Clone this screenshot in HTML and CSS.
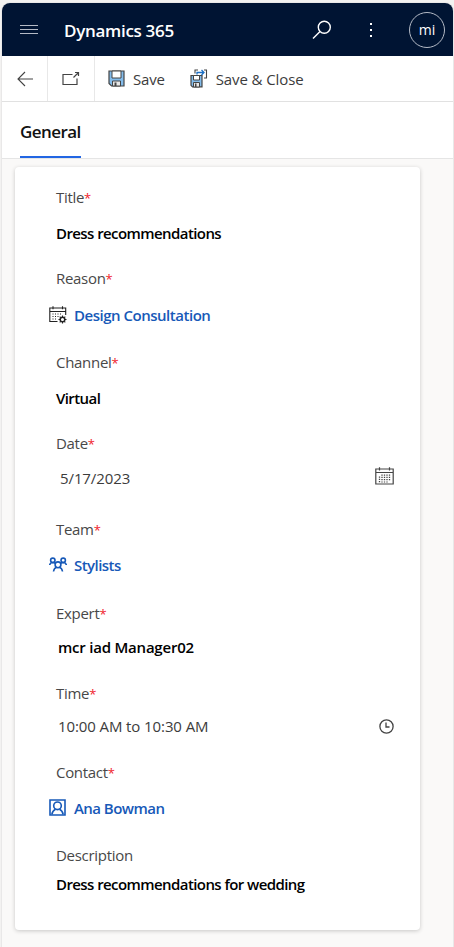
FILE: index.html
```html
<!DOCTYPE html>
<html lang="en">
<head>
<meta charset="utf-8">
<title>Dynamics 365</title>
<link rel="stylesheet" href="styles.css">
</head>
<body>
<div class="app">
  <header class="topbar">
    <svg class="menu" width="20" height="12" viewBox="0 0 20 12" fill="none" stroke="#b4bac6"><path d="M1 1.5h18M1 5.5h18M1 9.5h18"/></svg>
    <span class="brand">Dynamics 365</span>
    <svg class="search" width="20" height="20" viewBox="0 0 20 20" fill="none" stroke="#fff" stroke-width="1.4"><circle cx="12.3" cy="7.2" r="6"/><path d="M8 11.6 1 18.6"/></svg>
    <svg class="more" width="4" height="16" viewBox="0 0 4 16" fill="#fff"><path d="M1 1h2v2H1zM1 7h2v2H1zM1 13h2v2H1z"/></svg>
    <span class="avatar">mi</span>
  </header>
  <nav class="commands">
    <span class="cell back"><svg width="16" height="16" viewBox="0 0 16 16" fill="none" stroke="#444" stroke-width="1.1"><path d="M8 1 1 8l7 7M1 8h15"/></svg></span>
    <span class="cell popout"><svg width="18" height="15" viewBox="0 0 18 15" fill="none" stroke="#444" stroke-width="1.2"><path d="M10.500 3.500H1v10h14V7.500M11.500 6.500 16.500 1.500M13 1.500h3.500V5"/></svg></span>
    <span class="command save"><svg width="17" height="17" viewBox="0 0 17 17"><path d="M1 1h15v15H3.500L1 13.500z" fill="#83bceb" stroke="#444" stroke-width="1.2"/><path d="M4 1h9v7H4z" fill="#fff" stroke="#444"/><path d="M4.500 11h8v5h-8z" fill="#e8e8e8" stroke="#444"/><path d="M6.500 12.500h2V16h-2z" fill="#444"/></svg>Save</span>
    <span class="command"><svg width="18" height="19" viewBox="0 0 18 19"><path d="M1 6.500h11v11.300H2.500L1 16.300z" fill="#83bceb" stroke="#444" stroke-width="1.2"/><path d="M3.500 6.500h6v4.500h-6z" fill="#fff" stroke="#444"/><path d="M3.500 13.500h6V18h-6z" fill="#e8e8e8" stroke="#444"/><path d="M5 14.500h1.500V18H5z" fill="#444"/><path d="M5 4.500V1h3M14 1h2.500v8H14" fill="none" stroke="#444" stroke-width="1.1"/><path d="M7 5.500v-2h7M11.500 1 14 3.500 11.500 6" fill="none" stroke="#1b6fc4" stroke-width="1.3"/></svg>Save &amp; Close</span>
  </nav>
  <div class="tabs"><span class="tab">General</span></div>
  <main class="content">
    <section class="card">
      <div class="field title"><div class="label">Title<i>*</i></div><div class="value strong">Dress recommendations</div></div>
      <div class="field reason"><div class="label">Reason<i>*</i></div><div class="value link"><svg width="18" height="18" viewBox="0 0 18 18" fill="none" stroke="#222" stroke-width="1.1"><path d="M8.500 15.500H.8V2h15.900v7M.8 5.500h15.900M4 .3v3M13.500 .3v3"/><path d="M3.500 8h1M6 8h1M8.500 8h1M11 8h1M3.500 10.500h1M6 10.500h1M8.500 10.500h1M3.500 13h1M6 13h1"/><circle cx="13.500" cy="13.500" r="2.300" stroke-width="1.500"/><path d="M13.500 9.500v1.500M13.500 16v1.500M9.500 13.500H11M16 13.500h1.500M10.700 10.700l1 1M15.300 15.300l1 1M10.700 16.300l1-1M15.300 11.700l1-1"/></svg>Design Consultation</div></div>
      <div class="field channel"><div class="label">Channel<i>*</i></div><div class="value strong">Virtual</div></div>
      <div class="field date"><div class="label">Date<i>*</i></div><div class="value plain">5/17/2023<svg width="19" height="18" viewBox="0 0 19 18" fill="none" stroke="#444" stroke-width="1.2"><path d="M.8 2h17.400v15H.8zM.8 5.500h17.400M4.500 .2v3.300M14.500 .2v3.300"/><path d="M7 7.500v8M9.500 7.500v8M12 7.500v8M14.500 7.500v6M4.500 9.500v6" stroke-width="1.300" stroke-dasharray="1.200 1.100"/></svg></div></div>
      <div class="field team"><div class="label">Team<i>*</i></div><div class="value link"><svg width="18" height="16" viewBox="0 0 18 16" fill="none" stroke="#1759b8" stroke-width="1.600"><circle cx="3.800" cy="3.300" r="2.200"/><circle cx="14.200" cy="3.300" r="2.200"/><circle cx="9" cy="7.800" r="2.900"/><path d="M.7 8Q1 5.600 3.500 5.500q2 0 3 1M17.300 8Q17 5.600 14.500 5.500q-2 0-3 1M4.500 14.500q.5-3.500 3-4.300M13.500 14.500q-.5-3.500-3-4.300"/></svg>Stylists</div></div>
      <div class="field expert"><div class="label">Expert<i>*</i></div><div class="value strong">mcr iad Manager02</div></div>
      <div class="field time"><div class="label">Time<i>*</i></div><div class="value plain">10:00 AM to 10:30 AM<svg width="15" height="15" viewBox="0 0 15 15" fill="none" stroke="#444" stroke-width="1.300"><circle cx="7.500" cy="7.500" r="6.600"/><path d="M7 3.500V8h3.500"/></svg></div></div>
      <div class="field contact"><div class="label">Contact<i>*</i></div><div class="value link"><svg width="17" height="17" viewBox="0 0 17 17" fill="none" stroke="#1759b8" stroke-width="1.600"><path d="M1 1h15v15H1z"/><circle cx="8.500" cy="6.800" r="3.800"/><path d="M2.800 15.500q.8-4 3.700-5.300M14.200 15.500q-.8-4-3.700-5.300"/></svg>Ana Bowman</div></div>
      <div class="field description"><div class="label">Description</div><div class="value strong">Dress recommendations for wedding</div></div>
    </section>
  </main>
</div>
</body>
</html>
```

FILE: styles.css
```css
* { box-sizing: border-box; }
body {
  margin: 0;
  height: 947px;
  padding: 3px 1px 0 2px;
  overflow: hidden;
  background: #f3f2f1;
  font-family: "Segoe UI", "Open Sans", "Noto Sans", sans-serif;
  font-size: 15px;
  color: #3c3c3c;
}
svg { display: block; flex: none; }
.app {
  display: flex;
  flex-direction: column;
  height: 944px;
  background: #faf9f8;
  border-radius: 8px 8px 0 0;
  overflow: hidden;
  box-shadow: 0 0 0 1px #e9e8e8;
}
.topbar {
  display: flex;
  align-items: center;
  height: 53px;
  padding: 0 8px 0 17px;
  background: #001433;
  color: #fff;
}
.brand { margin-left: 25px; padding-top: 2px; font-size: 17px; font-weight: 600; letter-spacing: -0.3px; width: 248px; white-space: nowrap; }
.more { margin-left: 37px; }
.avatar {
  display: flex;
  align-items: center;
  justify-content: center;
  width: 36px;
  height: 36px;
  margin-left: auto;
  border: 1px solid #b4bac6;
  border-radius: 50%;
  font-size: 14px;
}
.commands { display: flex; height: 46px; background: #fff; border-bottom: 1px solid #e1e1e1; }
.cell { display: flex; align-items: center; justify-content: center; border-right: 1px solid #e8e8e8; }
.back { width: 46px; }
.popout { width: 47px; }
.command { display: flex; align-items: center; gap: 8px; margin-left: 25px; letter-spacing: -0.1px; }
.save { margin-left: 13px; letter-spacing: -0.2px; }
.tabs { display: flex; height: 57px; padding-left: 18px; background: #fff; border-bottom: 1px solid #e5e5e5; }
.tab { height: 56px; border-bottom: 2px solid #2266e3; color: #111; font-size: 17px; font-weight: 600; line-height: 59px; width: 61px; letter-spacing: -0.55px; }
.content { padding: 8px 0 0 13px; }
.card { width: 405px; height: 763px; padding: 20px 26px 0 41px; background: #fff; border-radius: 4px; box-shadow: 0 1px 4px rgba(0,0,0,.2); }
.field { display: flex; flex-direction: column; justify-content: space-between; }
.label, .value { height: 20px; line-height: 20px; white-space: nowrap; }
.label { color: #484848; letter-spacing: -0.3px; }
.label i { color: #f0222b; font-size: 13px; font-style: normal; }
.value { display: flex; align-items: center; }
.strong { color: #000; font-weight: 600; letter-spacing: -0.58px; }
.link { gap: 8px; margin-left: -7px; color: #1759b8; font-weight: 600; letter-spacing: -0.55px; }
.plain { justify-content: space-between; letter-spacing: -0.1px; }
.title { height: 56px; margin-bottom: 25px; }
.reason { height: 57px; margin-bottom: 27px; }
.channel { height: 56px; margin-bottom: 25px; }
.date { height: 55px; margin-bottom: 31px; }
.team { height: 56px; margin-bottom: 28px; }
.expert { height: 54px; margin-bottom: 26px; }
.time { height: 53px; margin-bottom: 26px; }
.contact { height: 56px; margin-bottom: 27px; }
.description { height: 49px; }
.reason .link { gap: 7px; letter-spacing: -0.48px; }
.team .link { gap: 7px; }
.contact .link svg { margin-bottom: 2px; }
.date .value { padding-left: 4px; }
.date .value svg { margin-bottom: 4px; }
.expert .value, .time .value { padding-left: 2px; }
.expert .value { letter-spacing: -0.22px; }
```
